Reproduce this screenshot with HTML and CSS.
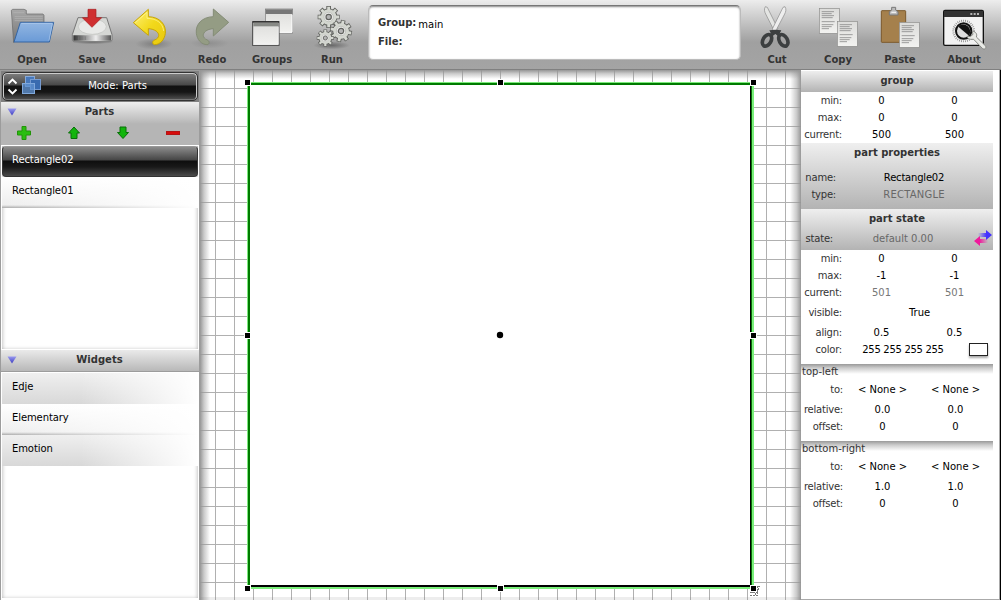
FILE: index.html
```html
<!DOCTYPE html>
<html lang="en">
<head>
<meta charset="utf-8">
<title>Editor</title>
<link rel="stylesheet" href="styles.css">
</head>
<body>
<svg class="defs" width="0" height="0">
  <defs>
    <linearGradient id="blue" x1="0" y1="0" x2="0" y2="1"><stop offset="0" stop-color="#92b6e2"/><stop offset="1" stop-color="#6a9ad6"/></linearGradient>
    <linearGradient id="grey" x1="0" y1="0" x2="0" y2="1"><stop offset="0" stop-color="#a8a8a8"/><stop offset="1" stop-color="#757575"/></linearGradient>
    <linearGradient id="paper" x1="0" y1="0" x2="0" y2="1"><stop offset="0" stop-color="#dcdcda"/><stop offset="1" stop-color="#f2f2f0"/></linearGradient>
    <linearGradient id="metal" x1="0" y1="0" x2="1" y2="0"><stop offset="0" stop-color="#333"/><stop offset=".6" stop-color="#eee"/><stop offset="1" stop-color="#555"/></linearGradient>
    <linearGradient id="yellow" x1="0" y1="0" x2="1" y2="1"><stop offset="0" stop-color="#fff27a"/><stop offset=".5" stop-color="#f2d91c"/><stop offset="1" stop-color="#e8c80c"/></linearGradient>
    <radialGradient id="shade"><stop offset="0" stop-color="#000" stop-opacity=".35"/><stop offset="1" stop-color="#000" stop-opacity="0"/></radialGradient>
    <path id="teeth" d="M0-33V33M-33 0H33M-23.500-23.500l47 47M23.500-23.500l-47 47"/>
    <path id="teeth-in" d="M0-31V31M-31 0H31M-22-22l44 44M22-22l-44 44"/>
    <g id="gear"><use href="#teeth" stroke="#60625e" stroke-width="14"/><circle r="26" fill="#60625e"/><use href="#teeth-in" stroke="#d6d9d2" stroke-width="8.500"/><circle r="23.500" fill="#d3d6cf"/><circle r="14" fill="#eeeeec" stroke="#b4b6b1" stroke-width="2"/><circle r="8" fill="#b4b4b4" stroke="#60625e" stroke-width="3.500"/></g>
    <g id="page"><rect x="1" y="1" width="60" height="75" fill="url(#paper)" stroke="#8c8c8a" stroke-width="2"/><path d="M8 11h37M8 17h30M8 23h37M8 29h33M8 41h39M8 50h35M8 56h30M8 62h22" stroke="#888" stroke-width="2.4"/></g>
    <linearGradient id="tri" x1="0" y1="0" x2="0" y2="1"><stop offset="0" stop-color="#9a9af0"/><stop offset="1" stop-color="#3c3cc0"/></linearGradient>
    <linearGradient id="toBlue"><stop offset="0" stop-color="#43f" stop-opacity="0"/><stop offset=".6" stop-color="#43f"/></linearGradient>
    <linearGradient id="toPink"><stop offset=".4" stop-color="#f0189c"/><stop offset="1" stop-color="#f0189c" stop-opacity="0"/></linearGradient>
  </defs>
</svg>
<div class="app">
  <header class="toolbar">
    <nav class="tools tools-main">
      <div class="tool"><svg viewBox="6 0 180 150"><path d="M34 31l4-3h34l7 3v11h50l3 4v70H46l-5 12z" fill="url(#grey)" stroke="#666" stroke-width="2"/><path d="M40 38h32M44 50h84M44 56h84M44 62h84" stroke="#b5b5b5" stroke-width="2"/><path d="M61 67h100l-13 59H42z" fill="url(#blue)" stroke="#3465a4" stroke-width="3" stroke-linejoin="round"/><path d="M64 70h93M147 122l10-50" stroke="#b7d0f0" stroke-width="2"/></svg><span>Open</span></div>
      <div class="tool"><svg viewBox="186 0 180 150"><ellipse cx="277" cy="125" rx="65" ry="8" fill="url(#shade)"/><path d="M234 53h86l16 51v17l-5 4H222l-5-4v-17z" fill="#d5d7d4" stroke="#777" stroke-width="3" stroke-linejoin="round"/><ellipse cx="277" cy="80" rx="42" ry="23" fill="#e8e9e7" stroke="#c0c1be" stroke-width="2"/><path d="M220 106h113v16H220z" fill="url(#metal)"/><path d="M236 109v11M246 109v11M256 109v11" stroke="#777" stroke-width="2"/><path d="M264 28h24v25h17l-29 29-29-29h17z" fill="#cf2f30" stroke="#a51d1f" stroke-width="2"/></svg><span>Save</span></div>
      <div class="tool"><svg viewBox="366 0 180 150"><ellipse cx="462" cy="132" rx="56" ry="17" fill="url(#shade)" opacity=".6"/><path d="M400 68l45-40v22c34 1 54 23 51 50-2 18-15 34-32 34-8-1-8-11 0-14 22-9 13-32-19-34v20z" fill="url(#yellow)" stroke="#c7a506" stroke-width="3" stroke-linejoin="round"/><path d="M406 68l35-31v18c30 0 48 16 50 38" fill="none" stroke="#fff6a0" stroke-width="2"/></svg><span>Undo</span></div>
      <div class="tool"><svg viewBox="9 0 180 150"><ellipse cx="92" cy="130" rx="58" ry="16" fill="url(#shade)" opacity=".3"/><path d="M149 67l-46-40v23c-34 1-54 23-51 50 2 18 15 34 32 34 9-1 8-11 1-14-22-9-13-32 18-34v22z" fill="#949c84" stroke="#848c76" stroke-width="3" stroke-linejoin="round"/></svg><span>Redo</span></div>
      <div class="tool"><svg viewBox="186 0 180 150"><rect x="256" y="27" width="82" height="72" fill="url(#paper)" stroke="#777" stroke-width="2"/><path d="M257 28h80v14h-80z" fill="#777"/><path d="M260 97h76V44" fill="none" stroke="#fff" stroke-width="3"/><rect x="218" y="65" width="79" height="71" fill="url(#paper)" stroke="#444" stroke-width="3"/><path d="M218 64h79v4h-79z" fill="#222"/><path d="M220 68h75v11h-75z" fill="#888a86"/><path d="M220 133h75V80" fill="none" stroke="#fff" stroke-width="2"/></svg><span>Groups</span></div>
      <div class="tool"><svg viewBox="366 0 180 150"><ellipse cx="455" cy="136" rx="55" ry="12" fill="url(#shade)"/><use href="#gear" transform="translate(446 51)"/><use href="#gear" transform="translate(483 93) rotate(12)"/><use href="#gear" transform="translate(436 114) scale(.78)"/></svg><span>Run</span></div>
    </nav>
    <div class="info">
      <div class="info-row"><b>Group:</b><span>main</span></div>
      <div class="info-row"><b>File:</b></div>
    </div>
    <nav class="tools tools-edit">
      <div class="tool"><svg viewBox="21 0 180 150"><path d="M76 20c-5 8-2 16 1 22l28 55 9-10-32-65z" fill="#e4e5e3" stroke="#888" stroke-width="2"/><path d="M135 20c5 8 2 16-1 22l-29 55-8-10 32-65z" fill="#eee" stroke="#888" stroke-width="2"/><g fill="none" stroke="#3c3f40" stroke-width="11"><ellipse cx="81" cy="121" rx="12" ry="19" transform="rotate(30 81 121)"/><ellipse cx="130" cy="121" rx="12" ry="19" transform="rotate(-30 130 121)"/></g><path d="M88 91l18-2 18 2-9 18-9-7-9 7z" fill="#3c3f40"/></svg><span>Cut</span></div>
      <div class="tool"><svg viewBox="204 0 180 150"><use href="#page" transform="translate(237 24)"/><use href="#page" transform="translate(291 63)"/></svg><span>Copy</span></div>
      <div class="tool"><svg viewBox="390 0 180 150"><rect x="424" y="32" width="73" height="95" rx="2" fill="#a5804c" stroke="#7c5a2d" stroke-width="3"/><path d="M448 45v-10l7-5v-8h12v8l7 5v10z" fill="#bbb" stroke="#777" stroke-width="3"/><path d="M454 37h14" stroke="#eee" stroke-width="4"/><use href="#page" transform="translate(477 66)"/></svg><span>Paste</span></div>
      <div class="tool"><svg viewBox="582 0 180 150"><rect x="611" y="31" width="119" height="105" rx="4" fill="#f2f2f2" stroke="#111" stroke-width="4"/><path d="M612 32h117v19H612z" fill="#333"/><path d="M691 42h6m4 0h6m4 0h6" stroke="#ddd" stroke-width="5"/><circle cx="671" cy="93" r="31" fill="none" stroke="#777" stroke-width="6" stroke-dasharray="2 4"/><circle cx="671" cy="93" r="23" fill="#ddd" stroke="#111" stroke-width="6"/><path d="M655 80a21 21 0 0 1 32 27z" fill="#111"/><path d="M692 118c-7-1-13-7-9-10l8 2 8-7-2-9c9 0 16 8 12 17l27 26c5 7-3 14-9 8l-26-27z" fill="#e9eae6" stroke="#888a85" stroke-width="3"/></svg><span>About</span></div>
    </nav>
  </header>
  <main class="work">
    <aside class="side">
      <div class="mode-bar"><div class="mode">
        <svg class="mode-icon" viewBox="0 0 36 24"><path d="M1.500 9.500l4-4 4 4M1.500 15.500l4 4 4-4" fill="none" stroke="#fff" stroke-width="1.900"/><rect x="18.500" y="2.500" width="9" height="10" fill="#4778bb" stroke="#86a9d8"/><rect x="23.500" y="5.500" width="10" height="10" fill="#396bb0" stroke="#769bd0"/><rect x="15.500" y="9.500" width="12" height="10" fill="#5f91d0" fill-opacity=".8" stroke="#80a9dc"/></svg>
        <span class="mode-label">Mode: Parts</span>
      </div></div>
      <div class="head parts-head">
        <div class="head-title"><svg class="tri" viewBox="0 0 10 8"><path d="M.5.500h9l-4.500 7z" fill="url(#tri)"/></svg>Parts</div>
        <div class="part-actions">
          <svg viewBox="0 0 14 14"><path d="M5 .5h4V5h4.500v4H9v4.500H5V9H.5V5H5z" fill="#2bbd10" stroke="#239409" /></svg>
          <svg viewBox="0 0 14 14"><path d="M7 1l5.500 6H10v5.500H4V7H1.500z" fill="#12b50c" stroke="#087008"/></svg>
          <svg viewBox="0 0 14 14"><path d="M7 12.500l5.500-6H10V1H4v5.500H1.500z" fill="#12b50c" stroke="#087008"/></svg>
          <svg viewBox="0 0 14 14"><rect x=".5" y="5.500" width="13" height="3" fill="#d80c0c" stroke="#b51414"/></svg>
        </div>
      </div>
      <div class="list parts-list">
        <div class="item selected">Rectangle02</div>
        <div class="item even">Rectangle01</div>
      </div>
      <div class="head widgets-head"><div class="head-title"><svg class="tri" viewBox="0 0 10 8"><path d="M.5.500h9l-4.500 7z" fill="url(#tri)"/></svg>Widgets</div></div>
      <div class="list widgets-list">
        <div class="item odd">Edje</div>
        <div class="item even">Elementary</div>
        <div class="item odd">Emotion</div>
      </div>
    </aside>
    <section class="canvas">
      <svg width="601" height="530" viewBox="200 70 601 530" shape-rendering="crispEdges">
        <defs>
          <pattern id="grid" x="215" y="88" width="19" height="19" patternUnits="userSpaceOnUse"><path d="M0 0h19v1H1v18H0z" fill="#b0b0b0"/></pattern>
          <linearGradient id="edge"><stop offset="0" stop-color="#969696"/><stop offset=".4" stop-color="#969696" stop-opacity=".5"/><stop offset="1" stop-color="#969696" stop-opacity="0"/></linearGradient>
          <linearGradient id="edge-top" href="#edge" x1="0" y1="0" x2="0" y2="1"/>
          <linearGradient id="edge-right" href="#edge" x1="1" y1="0" x2="0" y2="0"/>
        </defs>
        <rect x="200" y="70" width="601" height="530" fill="#fff"/>
        <rect x="200" y="70" width="601" height="530" fill="url(#grid)"/>
        <rect x="250" y="85" width="500" height="500" fill="#fff"/>
        <rect x="200" y="70" width="10" height="530" fill="url(#edge)"/>
        <rect x="790" y="70" width="11" height="530" fill="url(#edge-right)"/>
        <rect x="200" y="70" width="601" height="9" fill="url(#edge-top)"/>
        <rect x="200" y="597" width="601" height="3" fill="#888" opacity=".15"/>
        <path d="M247 82h505v1H248v503h-1z" fill="#7bea7b"/>
        <path d="M248 83h503v2H250v501h-2z" fill="#007a00"/>
        <path d="M752 85h2v504H250v-2h502z" fill="#7bf07b"/>
        <path d="M751 85h1v502H250v-1h501z" fill="#087008"/>
        <path d="M750 85h1v502H250v-2h500z" fill="#000"/>
        <path d="M752 593l7-7M755 595l5-9M750 592h9M757 586v9M750 595h9" stroke="#777" stroke-dasharray="2 1"/>
        <g fill="#000" stroke="#fff">
          <rect x="244.500" y="79.500" width="6" height="6"/><rect x="497.500" y="79.500" width="6" height="6"/><rect x="750.500" y="79.500" width="6" height="6"/>
          <rect x="244.500" y="332.500" width="6" height="6"/><rect x="750.500" y="332.500" width="6" height="6"/>
          <rect x="244.500" y="585.500" width="6" height="6"/><rect x="497.500" y="585.500" width="6" height="6"/><rect x="750.500" y="585.500" width="6" height="6"/>
        </g>
        <circle cx="500" cy="335" r="3.200" shape-rendering="auto"/>
      </svg>
    </section>
    <aside class="props">
      <section class="group">
        <h2>group</h2>
        <div class="row"><label>min:</label><span>0</span><span>0</span></div>
        <div class="row"><label>max:</label><span>0</span><span>0</span></div>
        <div class="row"><label>current:</label><span>500</span><span>500</span></div>
      </section>
      <section class="part">
        <h2>part properties</h2>
        <div class="row wide"><label>name:</label><span class="tight">Rectangle02</span></div>
        <div class="row wide"><label>type:</label><span class="dim caps">RECTANGLE</span></div>
      </section>
      <section class="state-head">
        <h2>part state</h2>
        <div class="row state"><label>state:</label><span class="dim">default 0.00</span><svg viewBox="0 0 20 16"><path d="M5 3h8V0l6 5-6 5V7H5z" fill="url(#toBlue)"/><path d="M15 9H7V6l-6 5 6 5v-3h8z" fill="url(#toPink)"/></svg></div>
      </section>
      <section class="state-body">
        <div class="row"><label>min:</label><span>0</span><span>0</span></div>
        <div class="row"><label>max:</label><span>-1</span><span>-1</span></div>
        <div class="row tall-after"><label>current:</label><span class="dim">501</span><span class="dim">501</span></div>
        <div class="row tall-after visible"><label>visible:</label><span>True</span></div>
        <div class="row"><label>align:</label><span>0.5</span><span>0.5</span></div>
        <div class="row color"><label>color:</label><span class="rgba">255 255 255 255</span><i class="swatch"></i></div>
      </section>
      <section class="corner">
        <h3>top-left</h3>
        <div class="row tall-after"><label>to:</label><span>&lt; None &gt;</span><span>&lt; None &gt;</span></div>
        <div class="row"><label>relative:</label><span>0.0</span><span>0.0</span></div>
        <div class="row"><label>offset:</label><span>0</span><span>0</span></div>
      </section>
      <section class="corner">
        <h3>bottom-right</h3>
        <div class="row tall-after"><label>to:</label><span>&lt; None &gt;</span><span>&lt; None &gt;</span></div>
        <div class="row"><label>relative:</label><span>1.0</span><span>1.0</span></div>
        <div class="row"><label>offset:</label><span>0</span><span>0</span></div>
      </section>
    </aside>
  </main>
</div>
</body>
</html>
```

FILE: styles.css
```css
* { box-sizing: border-box; }
body { margin: 0; font: 10px/17px "DejaVu Sans", sans-serif; color: #000; }
.defs { position: absolute; }
.app { width: 1001px; height: 600px; display: flex; flex-direction: column; overflow: hidden; background: #fff; }

.toolbar { height: 70px; flex: none; display: grid; grid-template-columns: 368px 373px 1fr; background: linear-gradient(#ededed 0, #dadada 10px, #a0a0a0 42px, #a4a4a4 69px); border-bottom: 1px solid #808080; }
.tools { display: grid; justify-content: start; }
.tools-main { grid-template-columns: 60px 60px 60px 60px 60px 60px; padding-left: 2px; }
.tools-edit { grid-template-columns: 61px 62px 64px 60px; padding-left: 6px; }
.tool { width: 60px; text-align: center; color: #333; font-weight: bold; }
.tool svg { display: block; width: 60px; height: 50px; }
.tool span { display: block; line-height: 20px; }
.info { margin: 5px 0 10px; height: 55px; padding: 7px 9px; background: #fff; border: 1px solid #bbb; border-top: 1px solid #777; border-radius: 5px; box-shadow: inset 0 1px 2px #888; }
.info-row { height: 19px; display: flex; gap: 2px; line-height: 19px; }
.info-row b { color: #333; }
.info-row span { padding-top: 2px; }

.work { height: 530px; display: grid; grid-template-columns: 200px 601px 200px; }
.side { height: 530px; display: flex; flex-direction: column; padding: 1px 1px 0; background: #9c9c9c; }
.mode-bar { height: 31px; padding: 2px; background: #808080; }
.mode { height: 27px; display: flex; align-items: center; border: 1px solid #ccc; border-bottom-color: #777; border-radius: 4px; color: #fff; background: linear-gradient(#7b7b7b 0, #484848 11px, #111 12px, #151515 18px, #4c4c4c 100%); outline: 1px solid #333; outline-offset: 0; }
.mode-icon { width: 36px; height: 24px; margin-left: 3px; margin-top: -1px; }
.mode-label { width: 149px; text-align: center; line-height: 24px; margin-top: -1px; }
.head { flex: none; color: #333; font-weight: bold; text-align: center; }
.head-title { height: 18px; display: flex; align-items: center; justify-content: flex-start; padding-right: 17px; }
.head-title::after { content: ""; margin-right: auto; }
.tri { width: 10px; height: 8px; margin-right: auto; margin-left: 6px; margin-top: 2px; }
.parts-head { height: 43px; background: linear-gradient(#eee 0, #b5b5b5 22px, #b5b5b5 100%); }
.part-actions { display: flex; justify-content: space-between; padding: 6px 19px 0 16px; }
.part-actions svg { width: 14px; height: 14px; }
.list { border: 1px solid #fff; background: #fff; box-shadow: inset 0 1px 4px #aaa; }
.parts-list { height: 205px; flex: none; }
.widgets-head { height: 21px; background: linear-gradient(#eaeaea, #b8b8b8); }
.widgets-list { flex: 1; margin-top: 1px; border-bottom: 2px solid #fff; }
.item { height: 31px; padding-left: 10px; line-height: 27px; letter-spacing: -.1px; }
.odd { background: linear-gradient(90deg, transparent 40%, #fff 100%), linear-gradient(#efefef, #d8d8d8); }
.even { background: linear-gradient(90deg, transparent 0, #fff 100%), linear-gradient(#fff 0, #eee 28px, #aaa 31px); }
.selected { color: #fff; border: 1px solid #333; border-top-color: #999; border-radius: 4px; padding-left: 9px; line-height: 25px; background: linear-gradient(#8c8c8c 0, #454545 13px, #0e0e0e 14px, #191919 20px, #4b4b4b 100%); }

.canvas svg { display: block; }

.props { height: 530px; padding: 1px 7px 0 0; background: #fff; border-right: 1px solid #000; box-shadow: inset -1px -1px #aaa; }
h2, h3 { margin: 0; font-size: 10px; line-height: 17px; }
h2 { height: 21px; text-align: center; color: #333; line-height: 20px; }
h3 { height: 17px; font-weight: normal; color: #333; line-height: 15px; }
.group { height: 72px; }
.group h2 { background: linear-gradient(#eee, #b3b3b3); }
.part { height: 66px; padding-top: 0; background: linear-gradient(#efefef, #b3b3b3); }
.part h2 { height: 26px; }
.state-head { height: 41px; background: linear-gradient(#efefef, #b3b3b3); }
.state-body { height: 114px; }
.row { height: 17px; display: grid; grid-template-columns: 40px 73px 73px; column-gap: 0; text-align: center; white-space: nowrap; }
.row label { text-align: right; color: #333; margin-right: -1px; letter-spacing: -.22px; }
.row span { margin-left: 4px; margin-right: -4px; }
.wide { grid-template-columns: 34px 150px; }
.tight { letter-spacing: -.2px; }
.caps { letter-spacing: .2px; }
.rgba { letter-spacing: -.3px; }
.state { grid-template-columns: 31px 134px 21px; }
.state svg { width: 20px; height: 16px; margin-left: 7px; }
.visible { grid-template-columns: 40px 149px; }
.color { grid-template-columns: 40px 116px 30px; }
.swatch { width: 19px; height: 13px; margin: 2px 0 0 12px; border: 1px solid #222; background: #fff; box-shadow: 0 2px 2px #aaa; }
.tall-after { height: 20px; line-height: 17px; }
.dim { color: #686868; }
.state-body .dim { color: #777; }
.corner { height: 77px; padding-left: 1px; background: linear-gradient(#999 0, #ccc 4px, #fff 10px); }
```
